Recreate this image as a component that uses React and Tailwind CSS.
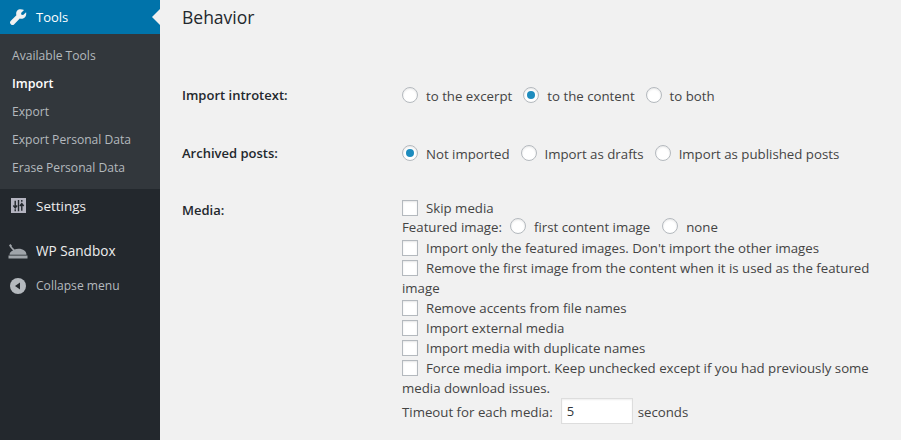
const font = "font-['Open_Sans',sans-serif]";

function Radio({ checked }) {
  return (
    <span className="inline-flex w-4 h-4 shrink-0 items-center justify-center rounded-full border border-[#b4b9be] bg-white shadow-[inset_0_1px_2px_rgba(0,0,0,0.1)] mr-2 -mt-[4px]">
      {checked && <span className="w-2 h-2 rounded-full bg-[#1e8cbe]" />}
    </span>
  );
}

function RadioRow({ options }) {
  return (
    <div className="flex items-center h-5 mt-[2px] text-[13.25px] text-[#444] gap-[11px]">
      {options.map((o) => (
        <label key={o.label} className="flex items-center">
          <Radio checked={o.checked} />
          <span>{o.label}</span>
        </label>
      ))}
    </div>
  );
}

function Check({ children }) {
  return (
    <div className="leading-5">
      <span className="inline-block w-4 h-4 align-[-3px] border border-[#b4b9be] bg-white shadow-[inset_0_1px_2px_rgba(0,0,0,0.1)] mr-2" />
      {children}
    </div>
  );
}

function SubItem({ children, active }) {
  return (
    <div className={`h-7 flex items-center pl-3 ${active ? "text-white font-semibold text-[12.5px]" : "text-[#b4b9be] text-[12.1px]"}`}>
      {children}
    </div>
  );
}

function Sidebar() {
  return (
    <aside className="w-40 shrink-0 h-[440px] bg-[#23282d]">
      <div className="relative h-[34px] bg-[#0073aa] flex items-center text-white text-[13px]">
        <svg className="ml-[9px] mr-[9px] w-[18px] h-[18px]" viewBox="0 0 20 20" fill="#f1f1f1">
          <path d="M16.7 2.3 13.4 5.6l.4 1.900 1.900.4 3.300-3.300c.5 2.400-.1 4.500-1.500 5.900-1.500 1.500-3.600 1.900-5.500 1.300L5.600 18.200c-.9.9-2.400.9-3.300 0l-.5-.5c-.9-.9-.9-2.400 0-3.300l6.400-6.400c-.6-1.900-.2-4 1.300-5.500C10.900 1.100 14.300 1.300 16.700 2.300z" />
        </svg>
        <span className="pt-[1px]">Tools</span>
        <span className="absolute right-0 top-[9px] w-0 h-0 border-y-[8px] border-y-transparent border-r-[8px] border-r-[#f1f1f1]" />
      </div>
      <div className="bg-[#32373c] h-[155px] pt-[8px]">
        <SubItem>Available Tools</SubItem>
        <SubItem active>Import</SubItem>
        <SubItem>Export</SubItem>
        <SubItem>Export Personal Data</SubItem>
        <SubItem>Erase Personal Data</SubItem>
      </div>
      <div className="h-[34px] flex items-center text-[13.500px] text-[#eee]">
        <svg className="ml-[11px] mr-[10px] w-[15px] h-[15px] -mt-[2px]" viewBox="0 0 16 16">
          <rect width="16" height="16" fill="#b4b4c0" />
          <path d="M4.500 3v7M2.500 8l2 2.500 2-2.500M4.500 12v2M11.500 13.500V7M9.500 8.500l2-2.500 2 2.500M11.500 2v2M8 2v12" stroke="#23282d" strokeWidth="1.500" fill="none" />
        </svg>
        <span>Settings</span>
      </div>
      <div className="h-[34px] mt-[11px] flex items-center text-[13.600px] text-[#eee]">
        <svg className="ml-2 mr-2 w-5 h-5 -mt-[2px]" viewBox="0 0 20 20" fill="#a0a5aa">
          <path d="M0.500 18.500h19V15.500H.5zM1.500 14.800h17c0-3.600-3.300-6-8-6-1.500 0-2.900.3-4 .8L3.500 6.500l.6-.6L2.500 4 1 5.300l1.200 2L5 10.500c-2.200 1-3.500 2.500-3.500 4.300z" />
        </svg>
        <span>WP Sandbox</span>
      </div>
      <div className="h-[34px] mt-[1px] flex items-center text-[12.100px] text-[#b4b9be]">
        <svg className="ml-[10px] mr-[10px] w-4 h-4" viewBox="0 0 16 16">
          <circle cx="8" cy="8" r="8" fill="#b4b9be" />
          <path d="M10 4.500v7L5 8z" fill="#23282d" />
        </svg>
        <span>Collapse menu</span>
      </div>
    </aside>
  );
}

export default function App() {
  return (
    <div className={`flex w-[901px] h-[440px] overflow-hidden bg-[#f1f1f1] ${font}`}>
      <Sidebar />
      <main className="flex-1 pl-[22px] text-[13.250px] text-[#444]">
        <h2 className="text-[17.500px] font-medium text-[#23282d] leading-6 pt-[5px] h-[85px]">Behavior</h2>
        <div className="flex h-[58px]">
          <div className="w-[220px] font-semibold text-[13px] text-[#23282d] leading-5">Import introtext:</div>
          <RadioRow
            options={[
              { label: "to the excerpt" },
              { label: "to the content", checked: true },
              { label: "to both" },
            ]}
          />
        </div>
        <div className="flex h-[57px]">
          <div className="w-[220px] font-semibold text-[13px] text-[#23282d] leading-5">Archived posts:</div>
          <RadioRow
            options={[
              { label: "Not imported", checked: true },
              { label: "Import as drafts" },
              { label: "Import as published posts" },
            ]}
          />
        </div>
        <div className="flex">
          <div className="w-[220px] font-semibold text-[13px] text-[#23282d] leading-5">Media:</div>
          <div className="w-[475px] -mt-[2px]">
            <Check>Skip media</Check>
            <div className="flex items-center h-5">
              <span className="mr-2">Featured image:</span>
              <Radio />
              <span className="mr-3">first content image</span>
              <Radio />
              <span>none</span>
            </div>
            <Check>Import only the featured images. Don't import the other images</Check>
            <Check>Remove the first image from the content when it is used as the featured image</Check>
            <Check>Remove accents from file names</Check>
            <Check>Import external media</Check>
            <Check>Import media with duplicate names</Check>
            <Check>Force media import. Keep unchecked except if you had previously some media download issues.</Check>
            <div className="flex items-center">
              <span className="mr-2 pt-[3px]">Timeout for each media:</span>
              <input
                readOnly
                value="5"
                className="w-[72px] h-[26px] px-[5px] border border-[#ddd] bg-white text-[13px] text-[#32373c] shadow-[inset_0_1px_2px_rgba(0,0,0,0.07)] outline-none"
              />
              <span className="ml-[5px] pt-[3px]">seconds</span>
            </div>
          </div>
        </div>
      </main>
    </div>
  );
}
